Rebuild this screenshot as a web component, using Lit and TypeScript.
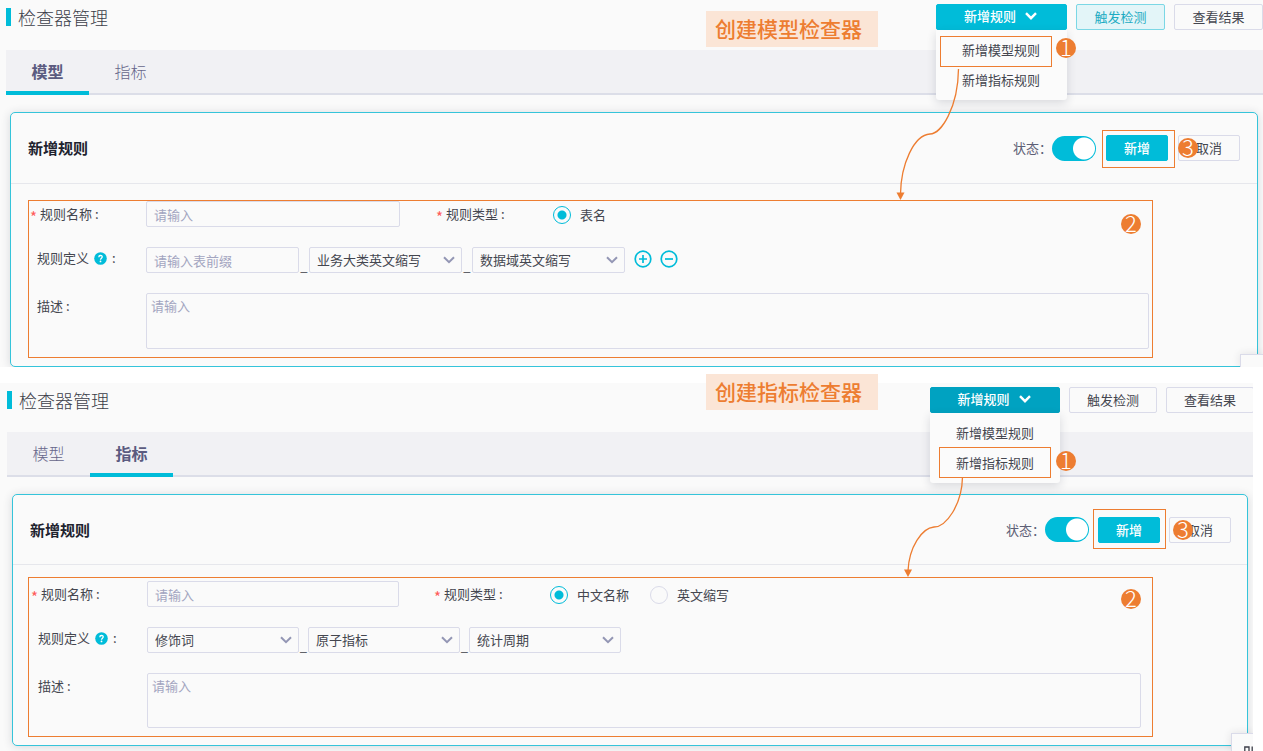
import { LitElement, html, css, svg, nothing } from "lit";
import { customElement, property } from "lit/decorators.js";
import { classMap } from "lit/directives/class-map.js";

interface Part {
  kind: "input" | "select";
  text: string;
}

interface Guide {
  id: string;
  caption: string;
  tab: number;
  pressed: boolean;
  step: number;
  types: string[];
  parts: Part[];
  editable: boolean;
  curve: string;
  tip: string;
}

const GUIDES: Guide[] = [
  {
    id: "model",
    caption: "创建模型检查器",
    tab: 0,
    pressed: false,
    step: 0,
    types: ["表名"],
    parts: [
      { kind: "input", text: "请输入表前缀" },
      { kind: "select", text: "业务大类英文缩写" },
      { kind: "select", text: "数据域英文缩写" },
    ],
    editable: true,
    curve: "M22.5 65 C22 104 5 130 -6 130 C-22 131 -35 160 -35.5 190",
    tip: "M-39.5 188.5 L-31.5 188.5 L-35.5 196 Z",
  },
  {
    id: "metric",
    caption: "创建指标检查器",
    tab: 1,
    pressed: true,
    step: 1,
    types: ["中文名称", "英文缩写"],
    parts: [
      { kind: "select", text: "修饰词" },
      { kind: "select", text: "原子指标" },
      { kind: "select", text: "统计周期" },
    ],
    editable: false,
    curve: "M32.5 90 C32 118 16 140 4 140 C-8 141 -21 160 -22 184",
    tip: "M-26 182.5 L-18 182.5 L-22 190 Z",
  },
];

const TABS = ["模型", "指标"];
const MENU = ["新增模型规则", "新增指标规则"];

@customElement("rule-panel")
class RulePanel extends LitElement {
  @property({ attribute: false }) guide!: Guide;

  static styles = css`
    :host {
      --cyan: #00bcd9;
      --orange: #ed7d31;
      --line: #dadbe9;
      --surface: #fafafa;
      --edge: 6px;
      --head: 50px;
      --lead: 131px;
      --side: 89px;
      --card-head: 71px;
      --card-pad: 17px;
      --card-gap: 10px;
      --form-top: 17px;
      --form-right: 108px;
      --form-bottom: 17px;
      --form-left: 26px;
      --label: 109px;
      --field: 254px;
      --part: 153px;
      --join: 10px;
      --area: 56px;
      --foot: 0px;
      --note-left: 17px;
      --note-right: 104px;
      --note-top: 16px;
      display: block;
      position: relative;
      overflow: hidden;
      background: var(--surface);
      color: #44464f;
      font-size: 13px;
      line-height: 20px;
    }
    :host([compact]) {
      --edge: 7px;
      --head: 49px;
      --lead: 130px;
      --side: 88px;
      --card-head: 70px;
      --card-pad: 16px;
      --card-gap: 9px;
      --form-top: 16px;
      --form-right: 106px;
      --form-left: 25px;
      --field: 252px;
      --part: 152px;
      --join: 9px;
      --area: 55px;
      --foot: 5px;
      --note-left: 15px;
      --note-right: 94px;
      --note-top: 12px;
      margin-right: 10px;
    }
    * { box-sizing: border-box; }
    button, input, select, textarea {
      font: inherit;
      color: inherit;
      margin: 0;
      outline: none;
    }
    .head {
      display: flex;
      align-items: flex-start;
      height: var(--head);
      padding: 4px 0 0 var(--edge);
      position: relative;
      z-index: 2;
    }
    .title {
      flex: 1;
      margin: 0;
      display: flex;
      align-items: center;
      gap: 7px;
      height: 26px;
      font-size: 18px;
      font-weight: 300;
      color: #3c3e49;
    }
    .title::before {
      content: "";
      width: 5px;
      height: 18px;
      background: var(--cyan);
    }
    .actions { display: flex; gap: 9px; }
    :host([compact]) .actions { margin-right: -1px; }
    .btn {
      height: 26px;
      width: 62px;
      padding: 0;
      border: 1px solid var(--line);
      border-radius: 2px;
      background: var(--surface);
      display: flex;
      align-items: center;
      justify-content: center;
      gap: 9px;
      white-space: nowrap;
    }
    .btn.side { width: var(--side); }
    .btn.lead { width: 100%; padding: 0 2px 2px 0; }
    .btn.primary {
      background: var(--cyan);
      border-color: var(--cyan);
      color: #fff;
      font-weight: 500;
    }
    .btn.pressed { background: #00a2c1; border-color: #00a2c1; }
    .btn.tint {
      background: #e3f5f8;
      border-color: #7bd7e5;
      color: #1cabc2;
    }
    .dropdown { position: relative; width: var(--lead); }
    .menu {
      position: absolute;
      top: 100%;
      left: 0;
      right: 0;
      margin: 0;
      padding: 5px 0;
      list-style: none;
      background: #fbfbfb;
      border-radius: 0 0 3px 3px;
      box-shadow: 0 3px 10px rgba(40, 44, 70, 0.16);
    }
    .menu li { position: relative; }
    .item {
      display: block;
      width: 100%;
      height: 30px;
      padding: 0 26px;
      border: 0;
      background: none;
      text-align: left;
      white-space: nowrap;
    }
    .note {
      position: absolute;
      border: 1px solid var(--orange);
      pointer-events: none;
    }
    .note.pick { left: 4px; width: 112px; top: 1px; height: 31px; }
    :host([compact]) .note.pick { left: 9px; top: -1px; }
    .badge {
      position: absolute;
      width: 20px;
      height: 20px;
      border-radius: 50%;
      background: var(--orange);
      color: #fff;
      font-weight: 300;
      font-size: 22px;
      line-height: 16px;
      display: flex;
      justify-content: center;
      pointer-events: none;
    }
    .badge.one { left: 120px; top: 3px; }
    :host([compact]) .badge.one { left: 126px; }
    .badge.two { right: 11px; top: 13px; }
    :host([compact]) .badge.two { top: 11px; }
    .badge.three { left: 0; top: 3px; }
    :host([compact]) .badge.three { left: 4px; }
    .arrow {
      position: absolute;
      left: 0;
      top: 0;
      width: 1px;
      height: 1px;
      overflow: visible;
      pointer-events: none;
    }
    .tabs {
      display: flex;
      height: 45px;
      margin-left: var(--edge);
      background: #f1f1f4;
      border-bottom: 2px solid #dcdee8;
    }
    .tab {
      width: 83px;
      height: 45px;
      padding: 0;
      border: 0;
      border-bottom: 4px solid transparent;
      background: none;
      font-size: 16px;
      font-weight: 300;
      color: #66668a;
    }
    .tab.on {
      border-bottom-color: var(--cyan);
      font-weight: 700;
      color: #5b5b80;
    }
    .card {
      position: relative;
      margin: 17px 5px 0 10px;
      border: 1px solid #35c4da;
      border-radius: 5px;
      background: var(--surface);
      box-shadow: 0 1px 10px rgba(40, 44, 60, 0.16);
    }
    :host([compact]) .card { margin-left: 12px; }
    .card-head {
      display: flex;
      align-items: center;
      gap: var(--card-gap);
      height: var(--card-head);
      padding: 0 var(--card-pad) 0 17px;
      border-bottom: 1px solid #e6e7ec;
    }
    .card-title {
      flex: 1;
      margin: 0;
      font-size: 15px;
      font-weight: 700;
      color: #20222e;
    }
    .state {
      display: flex;
      align-items: center;
      color: #5d5f76;
    }
    .switch {
      appearance: none;
      width: 44px;
      height: 25px;
      border-radius: 13px;
      background: radial-gradient(circle at 32px 50%, #fff 10.5px, var(--cyan) 11.5px);
    }
    .wrap { position: relative; }
    .note.save { left: -4px; top: -5px; width: 73px; height: 38px; }
    :host([compact]) .note.save { top: -8px; height: 40px; left: -5px; }
    .form {
      padding: var(--form-top) var(--form-right) var(--form-bottom) var(--form-left);
      position: relative;
    }
    .note.area {
      left: var(--note-left);
      right: var(--note-right);
      top: var(--note-top);
      bottom: 8px;
    }
    .row { display: flex; align-items: flex-start; }
    .row + .row { margin-top: 20px; }
    .name {
      width: var(--label);
      display: flex;
      align-items: center;
      gap: 5px;
      height: 26px;
      white-space: nowrap;
    }
    .name.hinted { height: 22px; }
    .required { gap: 4px; margin-left: -7px; width: calc(var(--label) + 7px); }
    .star { color: #ff5b5b; width: 6px; font-size: 15px; padding-top: 5px; }
    .name.kind { gap: 4px; margin-left: 36px; width: 117px; }
    :host([compact]) .name.kind { margin-left: 35px; width: 116px; }
    .box, textarea {
      border: 1px solid var(--line);
      border-radius: 2px;
      background: transparent;
    }
    .box {
      width: var(--part);
      height: 26px;
      padding: 0 7px;
    }
    .box.wide { width: var(--field); }
    textarea {
      display: block;
      flex: 1;
      min-width: 0;
      height: var(--area);
      padding: 2px 4px;
      resize: none;
    }
    ::placeholder { color: #a3a5c0; opacity: 1; }
    .pick-one { display: grid; align-items: center; }
    .pick-one > * { grid-area: 1 / 1; }
    .pick-one select { appearance: none; }
    .pick-one svg { justify-self: end; margin-right: 7px; pointer-events: none; }
    .join { width: var(--join); height: 26px; text-align: center; line-height: 38px; }
    .choices { display: flex; gap: 21px; height: 28px; align-items: center; }
    .choice { display: flex; align-items: center; gap: 9px; }
    .radio {
      appearance: none;
      width: 18px;
      height: 18px;
      border: 1px solid var(--line);
      border-radius: 50%;
    }
    .radio:checked {
      border-color: var(--cyan);
      background: radial-gradient(circle, var(--cyan) 4px, transparent 5px);
    }
    .row:first-child { height: 26px; }
    .tools { display: flex; gap: 8px; margin-left: 9px; height: 24px; align-items: center; }
    .tool { width: 18px; height: 18px; padding: 0; border: 0; background: none; display: block; }
    .tool svg, .help, .chev { display: block; }
    .corner {
      position: absolute;
      right: 0;
      bottom: 0;
      width: 23px;
      height: 13px;
      border: 1px solid var(--line);
      border-width: 1px 0 0 1px;
      background: var(--surface);
      box-shadow: 0 0 8px rgba(40, 44, 60, 0.12);
    }
    :host([compact]) .corner { width: 22px; height: 18px; }
    .corner svg { position: absolute; right: 0; bottom: 0; }
    .foot { height: var(--foot); }
  `;

  private chevron(color: string, weight: number) {
    return html`<svg class="chev" width="12" height="8" viewBox="0 0 12 8" aria-hidden="true">
      <path d="M1 1.2 L6 6.2 L11 1.2" fill="none" stroke=${color} stroke-width=${weight} />
    </svg>`;
  }

  private badge(n: number, place: string) {
    return html`<span class="badge ${place}">${n}</span>`;
  }

  private part(p: Part, i: number) {
    const name = `第${i + 1}段`;
    return html`${i ? html`<span class="join">_</span>` : nothing}
      ${p.kind === "input"
        ? html`<input class="box" id=${i ? nothing : "define"} placeholder=${p.text} />`
        : html`<span class="pick-one">
            <select class="box" id=${i ? nothing : "define"} aria-label=${name}><option>${p.text}</option></select>
            ${this.chevron("#9396b4", 2)}
          </span>`}`;
  }

  private tool(label: string, d: string) {
    return html`<button class="tool" type="button" aria-label=${label}>
      <svg width="18" height="18" viewBox="0 0 18 18" fill="none" stroke="#00bcd9" stroke-width="1.7">
        <circle cx="9" cy="9" r="7.8" /><path d=${d} />
      </svg>
    </button>`;
  }

  render() {
    const g = this.guide;
    return html`
      <header class="head">
        <h1 class="title">检查器管理</h1>
        <div class="actions">
          <div class="dropdown">
            <button class="btn primary lead ${classMap({ pressed: g.pressed })}" type="button" aria-expanded="true">
              新增规则 ${this.chevron("#fff", 2.4)}
            </button>
            <ul class="menu">
              ${MENU.map(
                (m, i) => html`<li>
                  <button class="item" type="button">${m}</button>
                  ${i === g.step ? html`<span class="note pick"></span>${this.badge(1, "one")}` : nothing}
                </li>`
              )}
            </ul>
            <svg class="arrow" aria-hidden="true">
              ${svg`<path d=${g.curve} fill="none" stroke="#ed7d31" stroke-width="1.3" />
              <path d=${g.tip} fill="#ed7d31" />`}
            </svg>
          </div>
          <button class="btn side ${classMap({ tint: !g.pressed })}" type="button">触发检测</button>
          <button class="btn side" type="button">查看结果</button>
        </div>
      </header>
      <nav class="tabs" role="tablist">
        ${TABS.map(
          (t, i) => html`<button class="tab ${classMap({ on: i === g.tab })}" role="tab" type="button" aria-selected=${i === g.tab}>${t}</button>`
        )}
      </nav>
      <section class="card">
        <div class="card-head">
          <h2 class="card-title">新增规则</h2>
          <label class="state">状态：<input class="switch" type="checkbox" role="switch" checked /></label>
          <div class="wrap">
            <button class="btn primary" type="button">新增</button>
            <span class="note save"></span>
          </div>
          <div class="wrap">
            <button class="btn" type="button">取消</button>
            ${this.badge(3, "three")}
          </div>
        </div>
        <form class="form">
          <div class="row">
            <label class="name required" for="name"><span class="star">*</span>规则名称 :</label>
            <input class="box wide" id="name" placeholder="请输入" />
            <span class="name kind"><span class="star">*</span>规则类型 :</span>
            <div class="choices">
              ${g.types.map(
                (t, i) => html`<label class="choice"><input class="radio" type="radio" name="kind" ?checked=${i === 0} />${t}</label>`
              )}
            </div>
          </div>
          <div class="row">
            <label class="name hinted" for="define">规则定义
              <svg class="help" width="13" height="13" viewBox="0 0 13 13" aria-hidden="true">
                <circle cx="6.5" cy="6.5" r="6.3" fill="#00bcd9" />
                <path d="M4.8 5.2 C4.8 2.9 8.3 3 8.2 5 C8.1 6.2 6.6 6.2 6.5 7.7" fill="none" stroke="#fff" stroke-width="1.3" />
                <circle cx="6.5" cy="9.4" r="0.9" fill="#fff" />
              </svg>:</label>
            ${g.parts.map((p, i) => this.part(p, i))}
            ${g.editable
              ? html`<span class="tools">
                  ${this.tool("添加", "M9 5 V13 M5 9 H13")} ${this.tool("删除", "M5 9 H13")}
                </span>`
              : nothing}
          </div>
          <div class="row">
            <label class="name" for="desc">描述 :</label>
            <textarea id="desc" placeholder="请输入"></textarea>
          </div>
          <span class="note area">${this.badge(2, "two")}</span>
        </form>
      </section>
      <div class="foot"></div>
      <div class="corner">
        ${g.pressed
          ? html`<svg width="9" height="5" viewBox="0 0 9 5" fill="none" stroke="#3c3e49" stroke-width="1.3" aria-hidden="true">
              <path d="M0.8 5 V1 H5 V5 M8.2 5 V0.5" />
            </svg>`
          : nothing}
      </div>
    `;
  }
}

@customElement("app-root")
class AppRoot extends LitElement {
  static styles = css`
    :host {
      display: block;
      background: #fff;
      font-family: "Noto Sans CJK SC", "Noto Sans", sans-serif;
      overflow: hidden;
    }
    .guides { display: grid; gap: 16px; }
    .guide { position: relative; }
    .caption {
      position: absolute;
      z-index: 3;
      top: 11px;
      right: 385px;
      width: 172px;
      box-sizing: border-box;
      margin: 0;
      padding: 0 0 2px 9px;
      background: #fbe5d6;
      color: #ed7d31;
      font-size: 21px;
      font-weight: 500;
      line-height: 34px;
      white-space: nowrap;
    }
    .guide + .guide .caption { top: -9px; }
  `;

  render() {
    return html`<main class="guides">
      ${GUIDES.map(
        (g, i) => html`<article class="guide">
          <p class="caption">${g.caption}</p>
          <rule-panel .guide=${g} ?compact=${i === 1}></rule-panel>
        </article>`
      )}
    </main>`;
  }
}
